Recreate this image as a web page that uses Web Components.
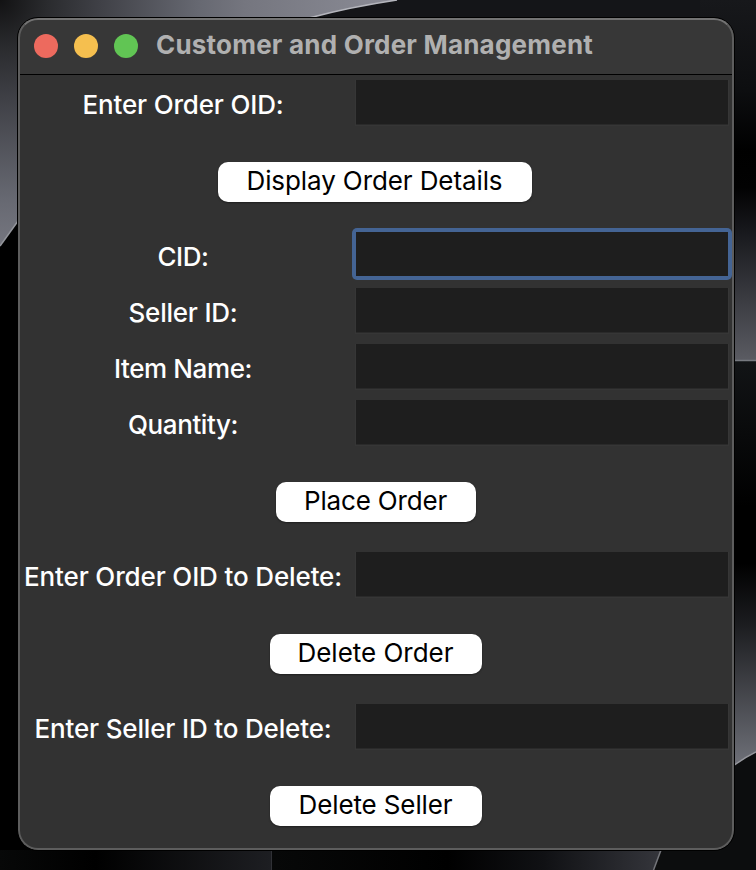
<!DOCTYPE html>
<html lang="en">
<head>
<meta charset="utf-8">
<title>Customer and Order Management</title>
<style>
html,body{margin:0;width:756px;height:870px;overflow:hidden;background:#000}
body{font-family:Inter,"Liberation Sans",sans-serif}
</style>
</head>
<body>
<desk-top>
  <app-window>
    <fit-text slot="title" span="437">Customer and Order Management</fit-text>
    <field-row><fit-text span="201">Enter Order OID:</fit-text></field-row>
    <action-row style="--w:314px;--shift:2px"><fit-text span="256">Display Order Details</fit-text></action-row>
    <field-row focused><fit-text span="51">CID:</fit-text></field-row>
    <field-row><fit-text span="109">Seller ID:</fit-text></field-row>
    <field-row><fit-text span="138">Item Name:</fit-text></field-row>
    <field-row><fit-text span="110">Quantity:</fit-text></field-row>
    <action-row style="--w:200px"><fit-text span="143">Place Order</fit-text></action-row>
    <field-row><fit-text span="318">Enter Order OID to Delete:</fit-text></field-row>
    <action-row style="--w:212px"><fit-text span="156">Delete Order</fit-text></action-row>
    <field-row><fit-text span="297">Enter Seller ID to Delete:</fit-text></field-row>
    <action-row style="--w:212px"><fit-text span="154">Delete Seller</fit-text></action-row>
  </app-window>
</desk-top>
<script>
function define(name, markup, extra) {
  customElements.define(name, class extends HTMLElement {
    constructor() {
      super();
      this.attachShadow({mode: 'open'}).innerHTML = markup;
    }
    connectedCallback() { if (extra) extra(this); }
  });
}

define('desk-top', `
<style>
:host{display:block;position:relative;width:756px;height:870px;box-sizing:border-box;padding:18px 22px 20px 18px;overflow:hidden}
svg{position:absolute;left:0;top:0}
</style>
<svg width="756" height="870" viewBox="0 0 756 870" aria-hidden="true">
  <defs>
    <radialGradient id="tl" cx="0" cy="0" r="395" gradientUnits="userSpaceOnUse"><stop offset="0" stop-color="#121213"/><stop offset=".12" stop-color="#2a2b2e"/><stop offset=".25" stop-color="#3f4046"/><stop offset=".5" stop-color="#666871"/><stop offset=".62" stop-color="#75767f"/><stop offset="1" stop-color="#8b8c96"/></radialGradient>
    <linearGradient id="r1" x1="0" y1="0" x2="0" y2="360" gradientUnits="userSpaceOnUse"><stop offset="0" stop-color="#17181b"/><stop offset=".25" stop-color="#0d0e10"/><stop offset=".42" stop-color="#000"/><stop offset=".52" stop-color="#020202"/><stop offset=".63" stop-color="#15161a"/><stop offset=".85" stop-color="#3e3f45"/><stop offset="1" stop-color="#5a5b62"/></linearGradient>
    <linearGradient id="r2" x1="0" y1="361" x2="0" y2="765" gradientUnits="userSpaceOnUse"><stop offset="0" stop-color="#121416"/><stop offset=".36" stop-color="#000"/><stop offset=".5" stop-color="#000"/><stop offset=".65" stop-color="#1b1c1f"/><stop offset="1" stop-color="#6e7078"/></linearGradient>
    <linearGradient id="b1" x1="0" y1="0" x2="271" y2="0" gradientUnits="userSpaceOnUse"><stop offset="0" stop-color="#070808"/><stop offset=".35" stop-color="#000"/><stop offset="1" stop-color="#1d1e22"/></linearGradient>
    <linearGradient id="b2" x1="273" y1="0" x2="660" y2="0" gradientUnits="userSpaceOnUse"><stop offset="0" stop-color="#070808"/><stop offset=".45" stop-color="#000"/><stop offset=".7" stop-color="#101114"/><stop offset="1" stop-color="#34353b"/></linearGradient>
  </defs>
  <rect width="756" height="870" fill="#000"/>
  <rect x="100" width="656" height="30" fill="#141518"/>
  <path d="M0 0H397Q350 7 309 18L180 100L18 221L0 246Z" fill="url(#tl)"/>
  <path d="M397 0Q350 7 309 18" fill="none" stroke="#b5b6bd" stroke-width="1.5"/>
  <path d="M0 246L18 221" stroke="#94969c" stroke-width="1.5"/>
  <rect x="700" width="56" height="360" fill="url(#r1)"/>
  <rect x="733" y="361" width="23" height="405" fill="url(#r2)"/>
  <path d="M733 360.500H756" stroke="#777a80" stroke-width="1.5"/>
  <path d="M733 766Q744 758 756 752V870H733Z" fill="#0c0d0e"/>
  <path d="M733 766Q744 758 756 752" fill="none" stroke="#96979d" stroke-width="1.5"/>
  <rect y="850" width="271" height="20" fill="url(#b1)"/>
  <path d="M272 850H661L653 870H272Z" fill="url(#b2)"/>
  <path d="M661 850L700 820H756V870H653Z" fill="#0c0d0e"/>
  <path d="M271.5 850V870" stroke="#303136"/>
  <path d="M661 850L653.500 870" stroke="#75767b" stroke-width="1.5"/>
</svg>
<slot></slot>`);

define('app-window', `
<style>
:host{display:flex;flex-direction:column;position:relative;box-sizing:border-box;width:716px;height:832px;border-radius:20px;background:#323232;overflow:hidden;outline:1px solid #000}
:host::after{content:"";position:absolute;inset:0;border:2px solid #5d5d5d;border-top-color:#737373;border-radius:20px;pointer-events:none;box-sizing:border-box}
header{display:flex;align-items:center;position:relative;flex:none;height:56px;padding:0 16px;background:#373737;box-shadow:0 1px 0 #000;color:#b0b0b0;font-size:26px;font-weight:700;line-height:30px}
.dots{display:flex;gap:16px;margin-right:18px}
i{width:24px;height:24px;border-radius:50%}
i:nth-child(1){background:#ed6a5e}i:nth-child(2){background:#f5bf4f}i:nth-child(3){background:#61c554}
.title{margin-top:-2px}
</style>
<header><div class="dots"><i></i><i></i><i></i></div><div class="title"><slot name="title"></slot></div></header>
<slot></slot>`);

define('field-row', `
<style>
:host{display:grid;grid-template-columns:330px 380px;column-gap:4px;height:56px;flex:none;align-items:center;box-sizing:border-box;color:#fff;font-size:26px;font-weight:450;line-height:32px}
label{text-align:center;padding-top:6px}
.ring{padding:4px;border-radius:5px}
input{display:block;box-sizing:border-box;width:372px;height:44px;margin:0;padding:0 6px;border:0;border-radius:0;outline:0;background:#1e1e1e;color:#fff;font:inherit;box-shadow:0 1px 0 #2a2a2a,0 1px 0 1px #363636}
:host([focused]) .ring{background:#446494}
:host([focused]) input{box-shadow:none}
</style>
<label><slot></slot></label><div class="ring"><input type="text" aria-label="value"></div>`);

define('action-row', `
<style>
:host{display:flex;height:96px;flex:none;box-sizing:border-box;padding-top:32px;justify-content:center;align-items:flex-start;padding-right:var(--shift,0)}
button{width:var(--w);height:40px;padding:0 1px 2px 0;border:0;border-radius:10px;background:#fff;color:#000;font:400 26px/32px Inter,"Liberation Sans",sans-serif;box-shadow:0 1px 2px #0006}
</style>
<button><slot></slot></button>`);

/* Text run whose tracking is adjusted so that it occupies "span" pixels. */
function fit(el) {
  el.style.letterSpacing = '0';
  const n = el.textContent.length, w = el.getBoundingClientRect().width;
  el.style.letterSpacing = (Number(el.getAttribute('span')) - w) / n + 'px';
}
define('fit-text', `
<style>:host{display:inline-block;white-space:nowrap}</style><slot></slot>`, fit);
document.querySelectorAll('fit-text').forEach(fit);
</script>
</body>
</html>
